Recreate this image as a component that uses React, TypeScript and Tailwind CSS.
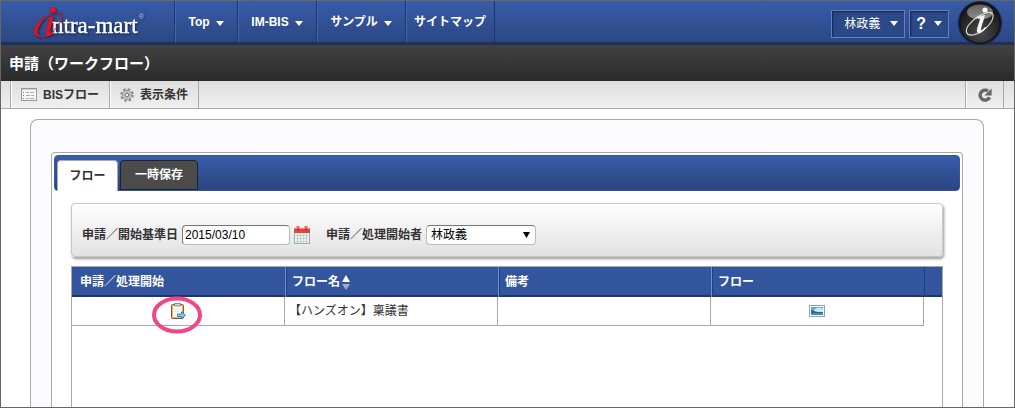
import type { ReactNode } from "react";

const navItems = [
  { label: "Top", menu: true, width: "w-[63px]" },
  { label: "IM-BIS", menu: true, width: "w-[79px]" },
  { label: "サンプル", menu: true, width: "w-[89px]" },
  { label: "サイトマップ", menu: false, width: "w-[89px]" },
];

const Caret = () => (
  <svg width="8" height="5" viewBox="0 0 8 5" className="shrink-0 fill-white">
    <path d="M0 0h8L4 5z" />
  </svg>
);

const Logo = () => (
  <a href="#" aria-label="intra-mart" className="block w-[173px] pl-8 font-normal">
    <svg
      width="130"
      height="41"
      viewBox="0 0 130 41"
      fontFamily="'Liberation Serif', serif"
      className="drop-shadow-[1px_1px_1px_#16244a]"
    >
      <text x="19" y="32" fontSize="23" fill="#fff" stroke="#fff" strokeWidth="0.4">
        ntra-mart
      </text>
      <text x="106" y="18" fontSize="7" fill="#c3cce2" fontFamily="'Liberation Sans', sans-serif">
        ®
      </text>
      <path
        d="M18 13C24 10 29 11 29 16C28 22 22 30 15 34C8 37 2 36 2 31C2 24 9 16 18 13"
        fill="none"
        stroke="#d7141f"
        strokeWidth="1"
      />
      <path d="M14 15C7 18 1 25 1 31C2 35 4 36 7 35C3 34 4 25 14 15z" fill="#d7141f" />
      <circle cx="20" cy="9" r="2.8" fill="#e0131e" />
      <path
        d="M14 17L20.5 15C20 20 17.5 27 17 31C17 33 19 31 20.5 29.5L21.5 30.5C19 34 16 36 14 35C11 34 14 25 16 19C16 18 14 18 14 18z"
        fill="#e0131e"
      />
    </svg>
  </a>
);

const ProductMark = () => (
  <svg width="46" height="44" viewBox="0 0 46 44" className="-mb-[3px] shrink-0">
    <defs>
      <radialGradient id="ball" cx="0.5" cy="0.75" r="0.7">
        <stop offset="0" stopColor="#4a4a4a" />
        <stop offset="1" stopColor="#151515" />
      </radialGradient>
      <linearGradient id="shine" x1="0" y1="0" x2="0" y2="1">
        <stop offset="0" stopColor="#6e6e6e" />
        <stop offset="1" stopColor="#a0a0a0" />
      </linearGradient>
    </defs>
    <circle cx="23" cy="22" r="22" fill="#14203c" />
    <circle cx="23" cy="22" r="20" fill="url(#ball)" stroke="#111" />
    <ellipse cx="23" cy="11" rx="13" ry="7.5" fill="url(#shine)" opacity="0.85" />
    <path
      d="M24 14C32 10 37 11 36 16C35 23 25 32 16 34C9 35 8 30 11 25C14 21 18 17 24 14"
      fill="none"
      stroke="#e2e2e2"
      strokeWidth="1.1"
    />
    <circle cx="28" cy="9" r="2.6" fill="#fff" />
    <path
      d="M20 16L28 14C27 19 24 26 24 29C25 30 27 27 28 26L29 27C26 31 23 33 21 32C18 31 22 22 23 18C23 17 21 17 20 17z"
      fill="#f2f2f2"
    />
  </svg>
);

const ListIcon = () => (
  <svg width="16" height="13" viewBox="0 0 16 13" shapeRendering="crispEdges">
    <path d="M0 0h16v13H0z" fill="#999" />
    <path d="M1 2h14v10H1z" fill="#f7f7f7" />
    <path d="M1 1h14v1H1z" fill="#ccc" />
    <path d="M5 4h3M9 4h4M5 7h4M10 7h3M5 10h3M9 10h4" transform="translate(0 .5)" stroke="#aaa" />
    <path d="M2 4h1v1H2z" fill="#4a9e58" />
    <path d="M2 7h1v1H2z" fill="#c85a5a" />
    <path d="M2 10h1v1H2z" fill="#5a78c8" />
  </svg>
);

const GearIcon = () => (
  <svg width="14" height="14" viewBox="0 0 14 14" fill="none">
    <circle cx="7" cy="7" r="5.7" stroke="#8a8a8a" strokeWidth="2.2" strokeDasharray="2.5 1.97" />
    <circle cx="7" cy="7" r="4.5" fill="#d6d6d6" stroke="#999" />
    <path d="M7 3v8M3 7h8M4.2 4.2l5.6 5.6M9.8 4.2L4.2 9.8" stroke="#999" strokeWidth="0.8" />
    <circle cx="7" cy="7" r="1.8" fill="#f2f2f2" stroke="#777" />
  </svg>
);

const RefreshIcon = () => (
  <svg width="14" height="14" viewBox="0 0 14 14">
    <path d="M11.6 9.4A5 5 0 1 1 10 3" fill="none" stroke="#666" strokeWidth="3.4" />
    <path d="M13.6 0.4V7.6H6.4z" fill="#666" />
  </svg>
);

const CalendarIcon = () => (
  <svg width="16" height="18" viewBox="0 0 16 18">
    <path d="M0 6h16v12H0z" fill="#9dacaa" />
    <path d="M1 6h14v11H1z" fill="#edf3f2" />
    <path
      d="M2 9.5h12M2 12.5h12M2 15.5h12M3.5 8v9M6.5 8v9M9.5 8v9M12.5 8v9"
      stroke="#b9cbca"
      strokeWidth="0.8"
    />
    <path d="M0 2h16v5H0z" fill="#e2453f" />
    <path d="M0 2h16v1H0z" fill="#f0817b" />
    <path d="M2.5 0h3v4h-3zM10.5 0h3v4h-3z" fill="#e66a65" />
    <path d="M3 3h2v1H3zM11 3h2v1h-2z" fill="#7a1c1c" />
  </svg>
);

const ClipboardIcon = () => (
  <svg width="15" height="16" viewBox="0 0 15 16">
    <rect x="0.5" y="1.5" width="12" height="14" rx="1" fill="#e0b27c" stroke="#8f5a26" />
    <path d="M2 3h9v11H2z" fill="#fbfbfb" />
    <path d="M3.5 0.5h6v2.5h-6z" fill="#d5d5d5" stroke="#777" strokeWidth="0.8" />
    <path d="M3 6.5h6M3 8.5h5" stroke="#e5e5e5" />
    <path d="M6.5 11h4V8.8l4 3.4-4 3.4V13.5h-4z" fill="#7cc8f2" stroke="#2474b0" strokeWidth="0.8" />
  </svg>
);

const PictureIcon = () => (
  <svg width="16" height="12" viewBox="0 0 16 12">
    <rect x="0.5" y="0.5" width="15" height="11" fill="#fff" stroke="#8fa5ab" />
    <path d="M2 2h12v5H2z" fill="#5ba5f3" />
    <path d="M5 5c3-3 6-2.500 9-1.500V7H5z" fill="#cbe6fb" />
    <path d="M2 7h12v3H2z" fill="#3f8cc0" />
    <path d="M2 5c3 1 5 2 12 2.500V8H2z" fill="#28714f" />
  </svg>
);

const ToolButton = ({ icon, children }: { icon: ReactNode; children: ReactNode }) => (
  <button className="flex items-center gap-1.5 border-r border-[#a9a9a9] px-2.5 shadow-[inset_1px_0_#fff]">
    {icon}
    {children}
  </button>
);

const headCell =
  "border-l border-l-[#6d8fd4] px-1.5 text-left font-bold shadow-[inset_1px_0_#223f7d] first:border-l-0 first:px-2 first:shadow-none";
const bodyCell = "border-r border-b border-[#a9a9a9] px-1";

export default function App() {
  return (
    <div className="flex min-h-screen flex-col border border-[#666] bg-white font-['Liberation_Sans','Noto_Sans_CJK_JP',sans-serif] text-xs text-[#333]">
      <header className="flex h-11 items-stretch border-b-3 border-[#203158] bg-linear-to-b from-[#385ca9] to-[#2c4783] font-bold text-white">
        <Logo />
        <nav className="flex border-r border-[#1f3564]">
          {navItems.map((item) => (
            <a
              key={item.label}
              href="#"
              className={`flex items-center justify-center gap-1.5 border-l border-[#1f3564] whitespace-nowrap shadow-[inset_1px_0_#4068b8] ${item.width}`}
            >
              {item.label}
              {item.menu && (
                <span className="pt-1">
                  <Caret />
                </span>
              )}
            </a>
          ))}
        </nav>
        <div className="ml-auto flex items-center gap-1 pr-[11px]">
          <button className="mt-1 flex h-7 items-center gap-2.5 border border-[#5f80c4] bg-[#2c4987] pr-1.5 pl-3 font-normal shadow-[inset_1px_1px_2px_#14254c]">
            林政義
            <Caret />
          </button>
          <button
            aria-label="ヘルプ"
            className="mt-1 flex h-7 items-center gap-2 border border-[#5f80c4] bg-[#2c4987] px-1.5 text-base shadow-[inset_1px_1px_2px_#14254c]"
          >
            ?
            <Caret />
          </button>
          <a href="#" aria-label="intra-mart" className="ml-1">
            <ProductMark />
          </a>
        </div>
      </header>

      <div className="flex h-9 items-center bg-linear-to-b from-[#424242] to-[#2a2a2a] px-2">
        <h1 className="text-[15px] leading-none font-bold text-white">申請（ワークフロー）</h1>
      </div>

      <div className="flex h-7 items-stretch border-b border-[#a9a9a9] bg-linear-to-b from-[#dedede] to-[#f0f0f0] pl-[9px] font-bold">
        <div className="flex border-l border-[#a9a9a9]">
          <ToolButton icon={<ListIcon />}>BISフロー</ToolButton>
          <ToolButton icon={<GearIcon />}>表示条件</ToolButton>
        </div>
        <button
          aria-label="更新"
          className="mr-2.5 ml-auto flex w-[39px] items-center justify-center border-x border-[#a9a9a9] shadow-[inset_1px_0_#fff]"
        >
          <RefreshIcon />
        </button>
      </div>

      <main className="mt-2.5 mr-[30px] ml-[29px] flex flex-1 flex-col rounded-t-lg border border-b-0 border-[#a9a9a9] bg-[#fcfcff] px-5 pt-8">
        <section className="flex flex-1 flex-col rounded-t border border-b-0 border-[#a9a9a9] bg-white px-0.5 pt-0.5">
          <div
            role="tablist"
            className="flex h-9 items-end gap-0.5 rounded border border-[#2f55a4] bg-linear-to-b from-[#385ca9] to-[#2a4580] px-0.5 font-bold"
          >
            <button
              role="tab"
              aria-selected="true"
              className="-mb-px h-[31px] w-[61px] rounded-t border border-b-0 border-[#a9a9a9] bg-white"
            >
              フロー
            </button>
            <button
              role="tab"
              aria-selected="false"
              className="h-[30px] rounded-t border border-[#222] bg-[#4b4b4b] px-3.5 text-white"
            >
              一時保存
            </button>
          </div>

          <div className="mx-[17px] mt-3 flex flex-1 flex-col">
            <form className="flex h-[54px] items-center rounded border border-[#c8c8c8] bg-linear-to-b from-white to-[#e2e2e2] px-2.5 pt-2.5 font-bold whitespace-nowrap shadow-[1px_2px_3px_#999]">
              <label htmlFor="base-date">申請／開始基準日</label>
              <input
                id="base-date"
                type="text"
                defaultValue="2015/03/10"
                className="ml-1 h-5 w-[108px] rounded-sm border border-[#bbb] border-t-[#777] border-l-[#777] bg-white px-0.5 font-normal text-black"
              />
              <button type="button" aria-label="カレンダー" className="mr-4 ml-1">
                <CalendarIcon />
              </button>
              <label htmlFor="starter">申請／処理開始者</label>
              <div className="relative ml-1">
                <select
                  id="starter"
                  className="block h-5 w-[110px] appearance-none rounded-sm border border-[#bbb] border-t-[#777] bg-white px-1 font-normal text-black"
                >
                  <option>林政義</option>
                </select>
                <svg
                  width="7"
                  height="6"
                  viewBox="0 0 7 6"
                  className="pointer-events-none absolute top-[7px] right-1.5"
                >
                  <path d="M0 0h7L3.5 6z" />
                </svg>
              </div>
            </form>

            <div className="mt-[9px] flex-1 border border-b-0 border-[#a9a9a9]">
              <table className="w-full table-fixed border-separate border-spacing-0">
                <colgroup>
                  <col />
                  <col />
                  <col />
                  <col />
                  <col className="w-[18px]" />
                </colgroup>
                <thead>
                  <tr className="h-[30px] bg-[#33559d] text-white shadow-[inset_0_-2px_#1f376d]">
                    <th className={headCell}>申請／処理開始</th>
                    <th className={headCell}>
                      <button className="flex items-center gap-0.5">
                        フロー名
                        <svg width="8" height="15" viewBox="0 0 8 15">
                          <path d="M4 0l4 7H0z" fill="#fff" />
                          <path d="M4 15l4-6H0z" fill="#9eabc7" />
                        </svg>
                      </button>
                    </th>
                    <th className={headCell}>備考</th>
                    <th className={headCell}>フロー</th>
                    <td className="border-l border-[#223f7d]"></td>
                  </tr>
                </thead>
                <tbody>
                  <tr className="h-[29px]">
                    <td className={bodyCell}>
                      <div className="relative flex justify-center">
                        <button aria-label="申請">
                          <ClipboardIcon />
                        </button>
                        <svg
                          width="52"
                          height="40"
                          viewBox="0 0 52 40"
                          className="pointer-events-none absolute top-1/2 left-1/2 -mt-4 -ml-[27px]"
                        >
                          <ellipse cx="26" cy="20" rx="23" ry="16.5" fill="none" stroke="#f04586" strokeWidth="4" />
                        </svg>
                      </div>
                    </td>
                    <td className={bodyCell}>【ハンズオン】稟議書</td>
                    <td className={bodyCell}></td>
                    <td className={bodyCell}>
                      <button aria-label="フロー参照" className="mx-auto block">
                        <PictureIcon />
                      </button>
                    </td>
                    <td></td>
                  </tr>
                </tbody>
              </table>
            </div>
          </div>
        </section>
      </main>
    </div>
  );
}
